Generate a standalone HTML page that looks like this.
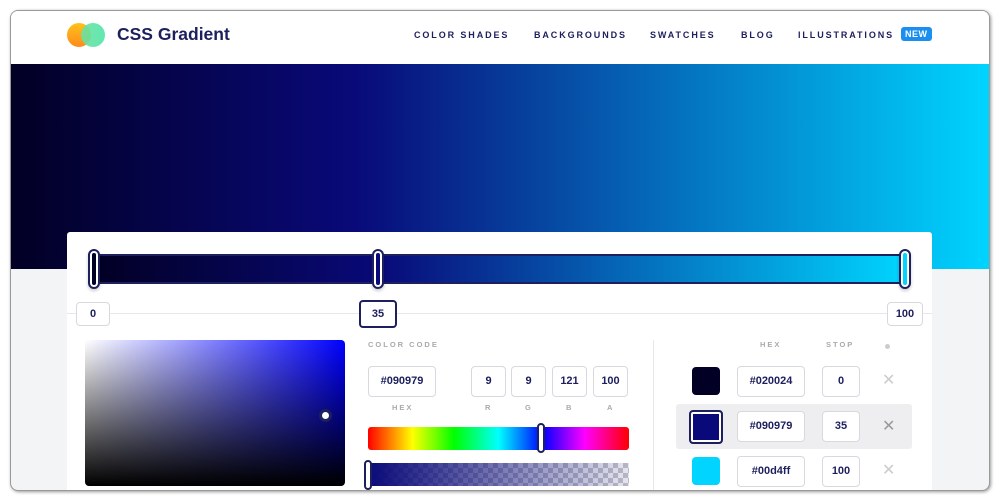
<!DOCTYPE html>
<html><head><style>
*{box-sizing:border-box;margin:0;padding:0}
body{width:1000px;height:500px;background:#fff;position:relative;overflow:hidden;font-family:"Liberation Sans",sans-serif;color:#1d1f5e}
.win{position:absolute;left:10px;top:10px;width:980px;height:481px;border:1px solid #999;border-radius:8px;overflow:hidden;background:#f3f4f5;box-shadow:1px 1px 3px rgba(0,0,0,.4)}
.hdr{position:absolute;left:0;top:0;width:100%;height:53px;background:#fff}
.grad{position:absolute;left:0;top:53px;width:100%;height:205px;background:linear-gradient(90deg,#020024 0%,#090979 35%,#00d4ff 100%)}
.logo{position:absolute;left:56px;top:12px;width:40px;height:24px}
.c1{position:absolute;left:0;top:0;width:24px;height:24px;border-radius:50%;background:linear-gradient(180deg,#ffc21a,#ff8a1d)}
.c2{position:absolute;left:14px;top:0;width:24px;height:24px;border-radius:50%;background:linear-gradient(90deg,#6de0a0,#4ee6a8);opacity:.9}
.title{position:absolute;left:106px;top:13px;font-size:17.5px;font-weight:bold;color:#1d1f5e}
.nav{position:absolute;top:19px;font-size:9px;font-weight:bold;letter-spacing:1.9px;color:#1d1f5e}
.new{position:absolute;left:890px;top:16px;background:#1b8ff0;color:#fff;font-size:9px;font-weight:bold;padding:2px 4px;border-radius:3px;letter-spacing:.5px}
.card{position:absolute;left:56px;top:221px;width:865px;height:270px;background:#fff;border-radius:3px}
.bar{position:absolute;left:27px;top:22px;width:812px;height:30px;border:2px solid #1d1f5e;border-radius:3px;background:linear-gradient(90deg,#020024 0%,#090979 35%,#00d4ff 100%)}
.h{position:absolute;top:17px;width:12px;height:40px;border:2px solid #1d1f5e;border-radius:6px;background:#fff;box-shadow:0 2px 3px rgba(0,0,0,.2)}
.h i{position:absolute;left:2px;top:2px;right:2px;bottom:2px;border-radius:4px}
.line{position:absolute;left:0;top:81px;width:100%;height:1px;background:#e8e8ec}
.box{position:absolute;border:1px solid #d8d8de;border-radius:4px;background:#fff;font-size:11px;font-weight:bold;text-align:center;color:#1d1f5e}
.lbl{position:absolute;font-size:7.5px;letter-spacing:2px;color:#aaa;font-weight:bold}
.sv{position:absolute;left:18px;top:108px;width:260px;height:146px;border-radius:4px;background:linear-gradient(0deg,#000,transparent),linear-gradient(90deg,#fff,#0000ff)}
.hue{position:absolute;left:301px;top:195px;width:261px;height:23px;border-radius:3px;background:linear-gradient(90deg,#f00,#ff0 17%,#0f0 33%,#0ff 50%,#00f 67%,#f0f 83%,#f00)}
.alpha{position:absolute;left:301px;top:231px;width:261px;height:23px;background:linear-gradient(90deg,#090979,rgba(9,9,121,.1)),repeating-conic-gradient(#ccc 0 25%,#fff 0 50%) 0 0/10px 10px}
.sw{position:absolute;left:625px;width:28px;height:28px;border-radius:4px}
.x{position:absolute;left:815px;font-size:16px;color:#ccc}
</style></head><body>
<div class="win">
<div class="hdr">
<div class="logo"><div class="c1"></div><div class="c2"></div></div>
<div class="title">CSS Gradient</div>
<div class="nav" style="left:403px">COLOR SHADES</div>
<div class="nav" style="left:523px">BACKGROUNDS</div>
<div class="nav" style="left:639px">SWATCHES</div>
<div class="nav" style="left:730px">BLOG</div>
<div class="nav" style="left:787px">ILLUSTRATIONS</div>
<div class="new">NEW</div>
</div>
<div class="grad"></div>
<div class="card">
<div class="bar"></div>
<div class="h" style="left:21px"><i style="background:#020024"></i></div>
<div class="h" style="left:305px"><i style="background:#090979"></i></div>
<div class="h" style="left:832px"><i style="background:#00d4ff"></i></div>
<div class="line"></div>
<div class="box" style="left:9px;top:70px;width:34px;height:24px;line-height:22px">0</div>
<div class="box" style="left:292px;top:68px;width:38px;height:28px;line-height:25px;border:2px solid #1d1f5e">35</div>
<div class="box" style="left:820px;top:70px;width:36px;height:24px;line-height:22px">100</div>
<div class="sv"></div>
<div style="position:absolute;left:252px;top:177px;width:13px;height:13px;border:3px solid #1d1f5e;border-radius:50%;background:#fff"></div>
<div class="lbl" style="left:301px;top:108px">COLOR CODE</div>
<div class="box" style="left:301px;top:134px;width:68px;height:31px;line-height:29px">#090979</div>
<div class="lbl" style="left:325px;top:171px">HEX</div>
<div class="box" style="left:404px;top:134px;width:35px;height:31px;line-height:29px">9</div>
<div class="box" style="left:444px;top:134px;width:35px;height:31px;line-height:29px">9</div>
<div class="box" style="left:485px;top:134px;width:35px;height:31px;line-height:29px">121</div>
<div class="box" style="left:526px;top:134px;width:35px;height:31px;line-height:29px">100</div>
<div class="lbl" style="left:418px;top:171px">R</div><div class="lbl" style="left:458px;top:171px">G</div><div class="lbl" style="left:499px;top:171px">B</div><div class="lbl" style="left:540px;top:171px">A</div>
<div class="hue"></div>
<div style="position:absolute;left:470px;top:191px;width:8px;height:30px;border:2px solid #1d1f5e;border-radius:4px;background:#fff"></div>
<div class="alpha"></div>
<div style="position:absolute;left:297px;top:228px;width:8px;height:30px;border:2px solid #1d1f5e;border-radius:4px;background:#fff"></div>
<div style="position:absolute;left:586px;top:108px;width:1px;height:160px;background:#e8e8ec"></div>
<div class="lbl" style="left:693px;top:108px">HEX</div>
<div class="lbl" style="left:759px;top:108px">STOP</div>
<div style="position:absolute;left:818px;top:112px;width:5px;height:5px;border-radius:50%;background:#ccc"></div>
<div class="sw" style="top:135px;background:#020024"></div>
<div class="box" style="left:670px;top:134px;width:68px;height:31px;line-height:29px">#020024</div>
<div class="box" style="left:755px;top:134px;width:38px;height:31px;line-height:29px">0</div>
<div class="x" style="top:138px">✕</div>
<div style="position:absolute;left:609px;top:172px;width:236px;height:45px;background:#eeeef0;border-radius:3px"></div>
<div class="sw" style="left:622px;top:178px;width:34px;height:34px;background:#090979;border:2px solid #1d1f5e;box-shadow:inset 0 0 0 2px #fff"></div>
<div class="box" style="left:670px;top:179px;width:68px;height:31px;line-height:29px">#090979</div>
<div class="box" style="left:755px;top:179px;width:38px;height:31px;line-height:29px">35</div>
<div class="x" style="top:184px;color:#999">✕</div>
<div class="sw" style="top:225px;background:#00d4ff"></div>
<div class="box" style="left:670px;top:224px;width:68px;height:31px;line-height:29px">#00d4ff</div>
<div class="box" style="left:755px;top:224px;width:38px;height:31px;line-height:29px">100</div>
<div class="x" style="top:228px">✕</div>
</div>
</div>
</body></html>
